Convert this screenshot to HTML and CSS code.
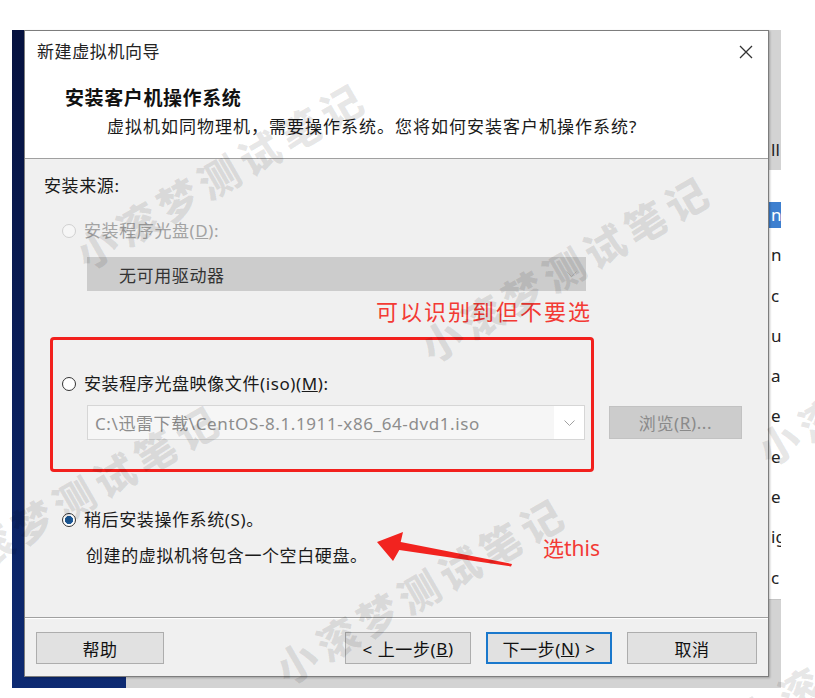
FILE: index.html
```html
<!DOCTYPE html>
<html lang="zh-CN">
<head>
<meta charset="utf-8">
<title>新建虚拟机向导</title>
<link rel="stylesheet" href="styles.css">
</head>
<body>
<div class="desktop">
  <div class="bg-navy"></div>
  <div class="bg-win">
    <div class="bg-head"><span>ll</span></div>
    <ul class="bg-list">
      <li><span class="sel">n</span></li>
      <li><span>n</span></li>
      <li><span>c</span></li>
      <li><span>u</span></li>
      <li><span>a</span></li>
      <li><span>e</span></li>
      <li><span>e</span></li>
      <li><span>e</span></li>
      <li><span>ig</span></li>
      <li><span>c</span></li>
    </ul>
  </div>
</div>

<div class="dialog">
  <header class="dlg-head">
    <div class="titlebar">
      <span class="title">新建虚拟机向导</span>
      <svg class="close" width="14" height="14" viewBox="0 0 14 14"><path d="M1 1L13 13M13 1L1 13" stroke="#333" stroke-width="1.3" fill="none"/></svg>
    </div>
    <h1 class="heading">安装客户机操作系统</h1>
    <p class="subtitle">虚拟机如同物理机，需要操作系统。您将如何安装客户机操作系统?</p>
  </header>

  <main class="dlg-body">
    <div class="src-label">安装来源:</div>
    <div class="radio-row disabled"><span class="radio"></span><span>安装程序光盘(<u>D</u>):</span></div>
    <div class="select disabled">
      <span class="select-text">无可用驱动器</span>
      <svg class="chev" width="11" height="6" viewBox="0 0 11 6"><polyline points="0.5,0.5 5.5,5.5 10.5,0.5" fill="none" stroke="#b3b3b3" stroke-width="1"/></svg>
    </div>
    <div class="radio-row iso"><span class="radio"></span><span>安装程序光盘映像文件(iso)(<u>M</u>):</span></div>
    <div class="combo-row">
      <div class="combo">
        <span class="combo-text">C:\迅雷下载\CentOS-8.1.1911-x86_64-dvd1.iso</span>
        <span class="combo-btn"><svg width="11" height="6" viewBox="0 0 11 6"><polyline points="0.5,0.5 5.5,5.5 10.5,0.5" fill="none" stroke="#a0a0a0" stroke-width="1"/></svg></span>
      </div>
      <button class="btn browse">浏览(<u>R</u>)...</button>
    </div>
    <div class="radio-row later"><span class="radio checked"></span><span>稍后安装操作系统(S)。</span></div>
    <p class="desc">创建的虚拟机将包含一个空白硬盘。</p>
  </main>

  <footer class="dlg-foot">
    <button class="btn help">帮助</button>
    <span class="spacer"></span>
    <button class="btn nav">&lt; 上一步(<u>B</u>)</button>
    <button class="btn nav default">下一步(<u>N</u>) &gt;</button>
    <button class="btn cancel">取消</button>
  </footer>
</div>

<div class="annot-box"></div>
<div class="annot-note">可以识别到但不要选</div>
<svg class="annot-arrow" width="150" height="50" viewBox="0 0 150 50"><polygon points="7,17 33,7 30.7,17.1 142,39 141,41.5 29.3,24.9 23,36" fill="#f2231f"/></svg>
<div class="annot-pick">选this</div>

<div class="wm w1">小滚梦测试笔记</div>
<div class="wm w2">小滚梦测试笔记</div>
<div class="wm w3">小滚梦测试笔记</div>
<div class="wm w4">小滚梦测试笔记</div>
<div class="wm w5">小滚梦</div>
<div class="wm w6">小滚梦</div>
</body>
</html>
```

FILE: styles.css
```css
* { box-sizing: border-box; }
html, body { margin: 0; padding: 0; }
body {
  width: 815px;
  height: 698px;
  position: relative;
  overflow: hidden;
  background: #fff;
  font-family: "Noto Sans", "Noto Sans CJK SC", sans-serif;
  font-size: 17px;
  letter-spacing: 0.6px;
  color: #1a1a1a;
}

/* backdrop windows */
.desktop {
  display: flex;
  height: 688px;
  padding: 30px 0 0 12px;
}
.bg-navy {
  width: 114px;
  background: linear-gradient(180deg, #06123f 0%, #0b2262 70%, #0d2a72 100%);
}
.bg-win {
  width: 655px;
  background: #d3d3d3;
  display: flex;
  flex-direction: column;
  align-items: flex-end;
  overflow: hidden;
  letter-spacing: 0;
  color: #222;
}
.bg-head {
  width: 12px;
  height: 140px;
  display: flex;
  align-items: flex-end;
  padding: 0 0 8px 2px;
  line-height: 24px;
  white-space: nowrap;
}
.bg-list {
  list-style: none;
  margin: 0;
  padding: 25px 0 0;
  width: 12px;
  height: 430px;
  background: #fff;
  border-bottom: 1px solid #c4c4c4;
}
.bg-list li { height: 40.3px; padding-top: 7px; }
.bg-list span {
  display: block;
  line-height: 26px;
  padding-left: 2px;
  white-space: nowrap;
}
.bg-list .sel { background: #3d7fcf; color: #fff; }

/* dialog */
.dialog {
  position: absolute;
  left: 24px;
  top: 30px;
  width: 745px;
  height: 647px;
  border: 1px solid #7d7d7d;
  background: #f0f0f0;
  display: flex;
  flex-direction: column;
  box-shadow: 1px 1px 2px rgba(0, 0, 0, 0.25);
}
.dlg-head {
  height: 128px;
  flex: none;
  background: #fff;
  border-bottom: 1px solid #a0a0a0;
}
.titlebar {
  height: 42px;
  display: flex;
  align-items: center;
  justify-content: space-between;
  padding: 0 15px 0 12px;
}
.title { line-height: 24px; color: #222; }
.heading {
  margin: 12px 0 0 40px;
  font-size: 19px;
  font-weight: 700;
  line-height: 26px;
  color: #111;
}
.subtitle {
  margin: 4px 0 0 82px;
  line-height: 24px;
  letter-spacing: 1px;
}

.dlg-body {
  flex: 1;
  padding: 15px 0 0 19px;
}
.src-label { line-height: 24px; }
.radio-row {
  display: flex;
  align-items: center;
  gap: 8px;
  line-height: 24px;
  padding-left: 18px;
  margin-top: 21px;
}
.radio-row.disabled { color: #a3a3a3; }
.radio-row.iso { margin-top: 81px; }
.radio-row.later { margin-top: 68px; }
.radio {
  width: 14px;
  height: 14px;
  flex: none;
  border-radius: 50%;
  border: 1px solid #333;
  background: #fff;
}
.disabled .radio {
  border-color: #d0d0d0;
  background: #f6f6f6;
}
.radio.checked {
  background: radial-gradient(circle, #1c5a98 0 3.8px, #fff 4.4px);
}

.select {
  margin: 14px 0 0 43px;
  width: 499px;
  height: 34px;
  background: #cccccc;
  display: flex;
  align-items: center;
  justify-content: space-between;
  padding: 0 9px 0 32px;
  color: #333;
}

.combo-row {
  margin: 9px 0 0 43px;
  display: flex;
  align-items: center;
  gap: 24px;
}
.combo {
  width: 498px;
  height: 35px;
  border: 1px solid #d6d6d6;
  background: #f6f6f6;
  display: flex;
  align-items: center;
}
.combo-text {
  flex: 1;
  padding-left: 7px;
  font-size: 17px;
  letter-spacing: 0.6px;
  color: #8d8d8d;
  white-space: nowrap;
}
.combo-btn {
  width: 30px;
  height: 100%;
  background: #fff;
  display: flex;
  align-items: center;
  justify-content: center;
}

.desc {
  margin: 12px 0 0 42px;
  line-height: 24px;
}

.btn {
  font: inherit;
  letter-spacing: inherit;
  color: #111;
  height: 32px;
  background: #e1e1e1;
  border: 1px solid #adadad;
  padding: 0;
  display: flex;
  align-items: center;
  justify-content: center;
}
.btn.browse {
  width: 133px;
  height: 33px;
  background: #cccccc;
  border-color: #c2c2c2;
  color: #8a8a8a;
}
.dlg-foot {
  height: 59px;
  flex: none;
  border-top: 1px solid #a0a0a0;
  box-shadow: inset 0 1px 0 #fff;
  display: flex;
  align-items: flex-start;
  gap: 15px;
  padding: 14px 11px 0 11px;
}
.spacer { flex: 1; }
.btn.help { width: 128px; }
.btn.nav { width: 126px; }
.btn.cancel { width: 130px; }
.btn.default { border: 2px solid #1a78cc; }

/* red annotations drawn over the screenshot */
.annot-box {
  position: absolute;
  left: 50px;
  top: 337px;
  width: 544px;
  height: 135px;
  border: 3px solid #f2201d;
  border-radius: 4px;
}
.annot-note {
  position: absolute;
  left: 376px;
  top: 295px;
  font-family: "Noto Sans CJK SC", sans-serif;
  font-size: 22px;
  letter-spacing: 2px;
  line-height: 30px;
  color: #f33a34;
}
.annot-arrow {
  position: absolute;
  left: 370px;
  top: 525px;
}
.annot-pick {
  position: absolute;
  left: 543px;
  top: 533px;
  font-family: "Noto Sans", "Noto Sans CJK SC", sans-serif;
  font-size: 21px;
  letter-spacing: 0;
  line-height: 30px;
  color: #f33a34;
}

/* faint source watermark */
.wm {
  position: absolute;
  font-family: "Noto Sans CJK SC", sans-serif;
  font-weight: 900;
  font-size: 41px;
  line-height: 44px;
  letter-spacing: 6px;
  color: rgba(0, 0, 0, 0.095);
  white-space: nowrap;
  transform-origin: 0 50%;
  transform: rotate(-30deg);
  pointer-events: none;
}
.w1 { left: 78px; top: 234px; }
.w2 { left: 423px; top: 327px; }
.w3 { left: -67px; top: 556px; }
.w4 { left: 278px; top: 649px; }
.w5 { left: 760px; top: 430px; }
.w6 { left: 740px; top: 700px; }
```
